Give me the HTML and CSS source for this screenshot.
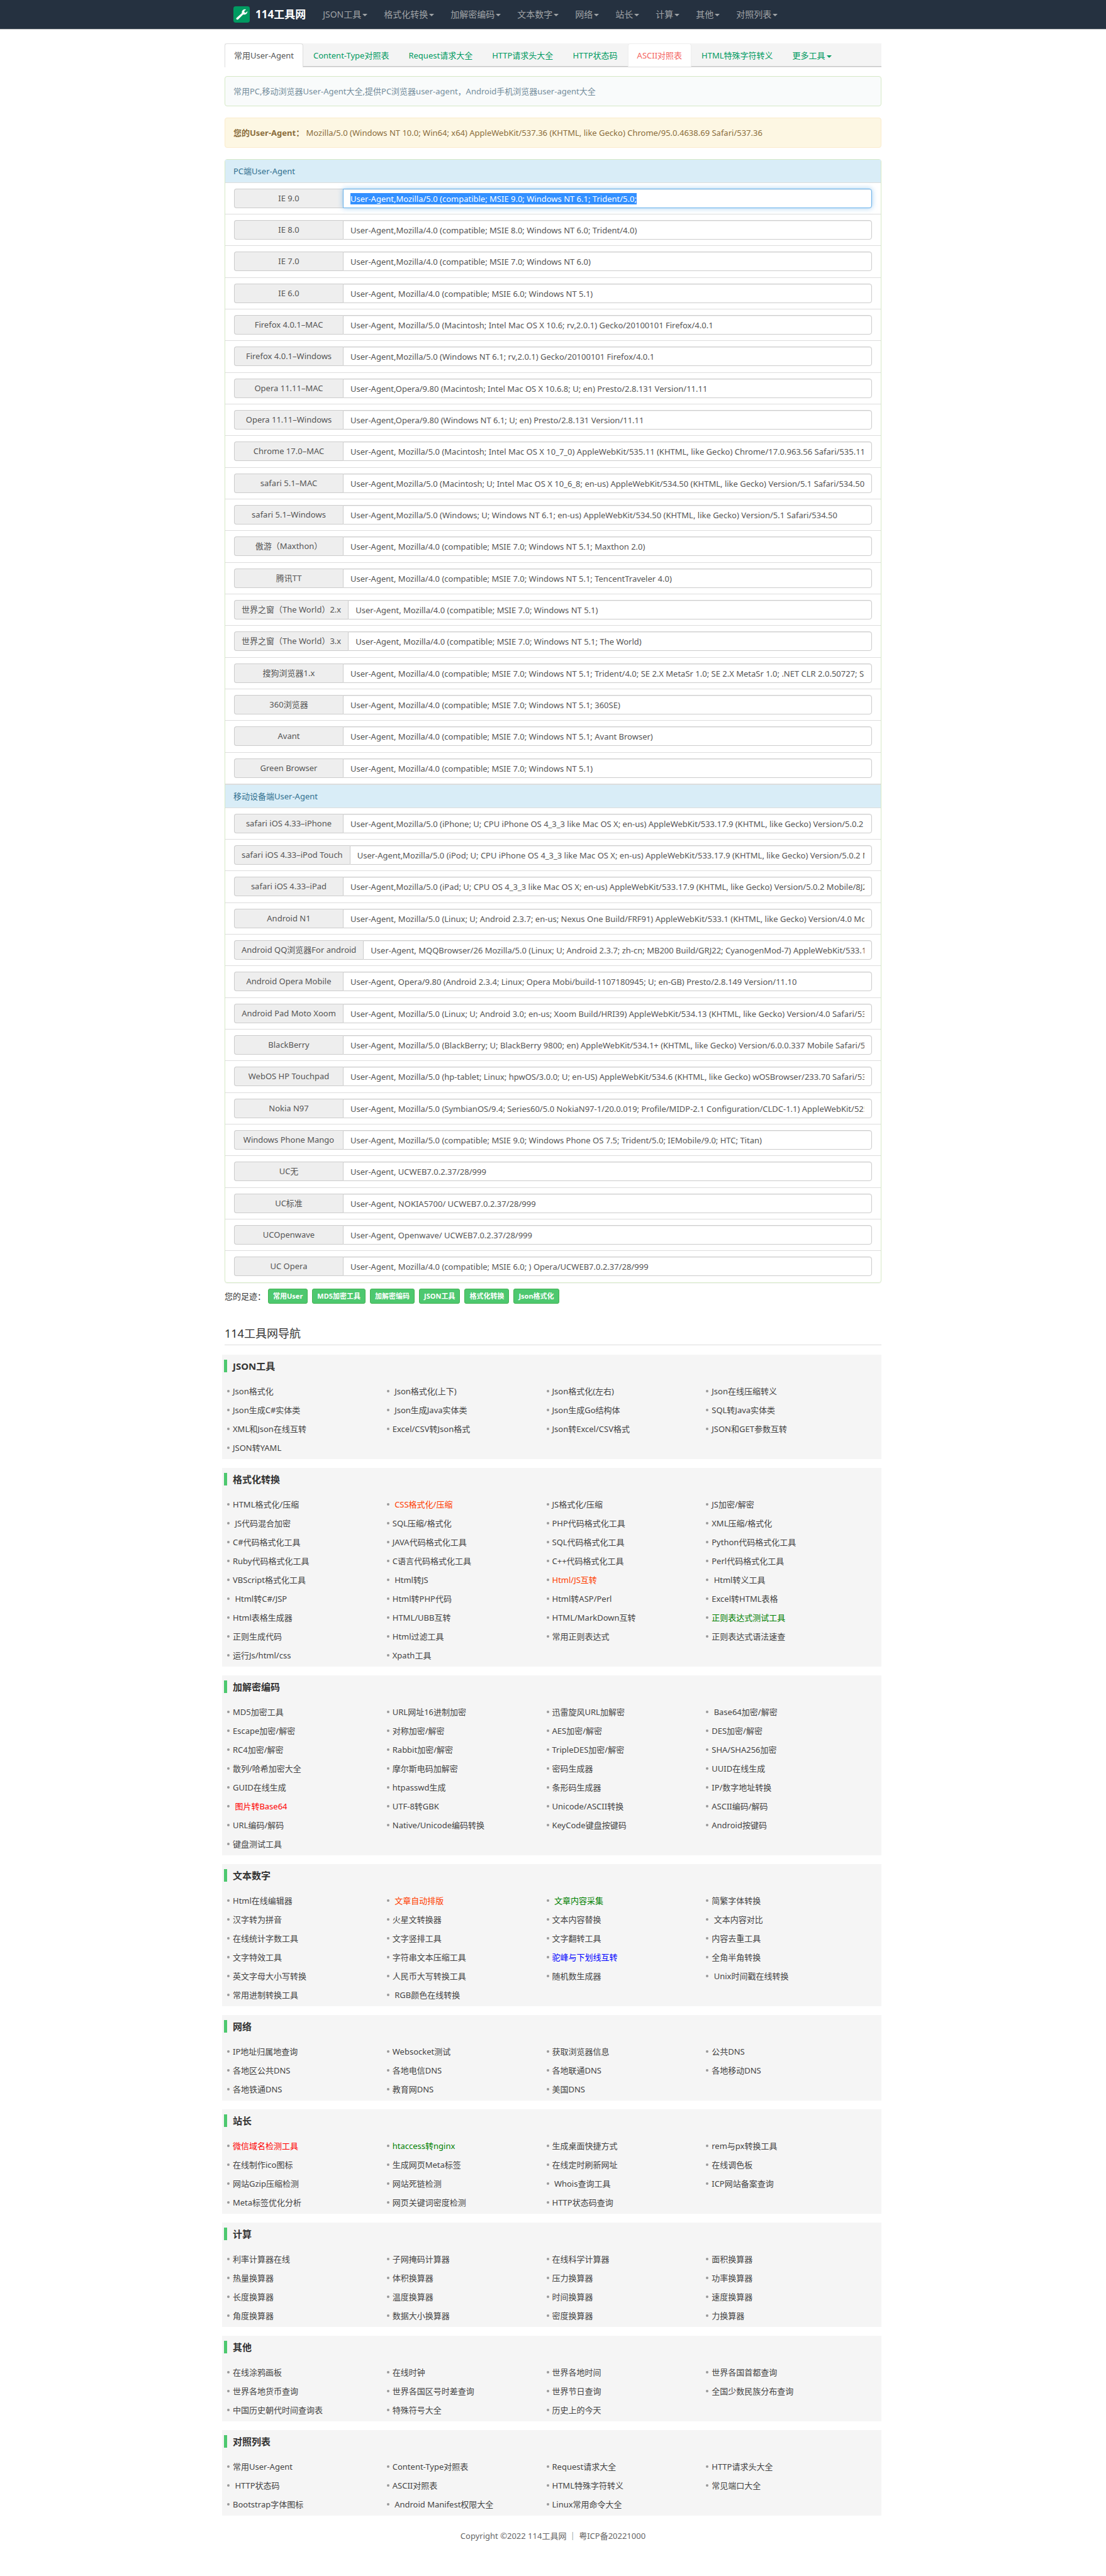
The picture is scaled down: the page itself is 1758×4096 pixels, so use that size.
FILE: index.html
```html
<!DOCTYPE html>
<html lang="zh-CN">
<head>
<meta charset="utf-8">
<meta name="viewport" content="width=device-width, initial-scale=1">
<title>常用User-Agent - 114工具网</title>
<link rel="stylesheet" href="styles.css">
</head>
<body>
<header class="navbar">
  <div class="container navbar-inner">
    <a class="brand" href="#">
      <svg class="brand-icon" viewBox="0 0 28 28" aria-hidden="true"><rect width="28" height="28" rx="4" fill="#009a61"/><path fill="#fff" d="M5 20.3 14.6 11.6C13.8 8 16 5.2 19.6 5l2.2.3-3.2 2.9.4 2.3 2.2.5 2.8-2.6c.3 3.6-2.4 6.4-6.2 5.8l-1-.2L8 22.6C6.200 23.700 3.900 21.900 5 20.300Z"/></svg>
      <span>114工具网</span>
    </a>
    <nav class="main-nav">
      <a href="#">JSON工具<i class="caret"></i></a>
      <a href="#">格式化转换<i class="caret"></i></a>
      <a href="#">加解密编码<i class="caret"></i></a>
      <a href="#">文本数字<i class="caret"></i></a>
      <a href="#">网络<i class="caret"></i></a>
      <a href="#">站长<i class="caret"></i></a>
      <a href="#">计算<i class="caret"></i></a>
      <a href="#">其他<i class="caret"></i></a>
      <a href="#">对照列表<i class="caret"></i></a>
    </nav>
  </div>
</header>

<main class="container">
  <nav class="tabs">
    <a class="tab tab-active" href="#">常用User-Agent</a>
    <a class="tab" href="#">Content-Type对照表</a>
    <a class="tab" href="#">Request请求大全</a>
    <a class="tab" href="#">HTTP请求头大全</a>
    <a class="tab" href="#">HTTP状态码</a>
    <a class="tab tab-hot" href="#">ASCII对照表</a>
    <a class="tab" href="#">HTML特殊字符转义</a>
    <a class="tab" href="#">更多工具<i class="caret"></i></a>
  </nav>

  <p class="notice notice-intro">常用PC,移动浏览器User-Agent大全,提供PC浏览器user-agent，Android手机浏览器user-agent大全</p>
  <p class="notice notice-agent"><strong>您的User-Agent：</strong> Mozilla/5.0 (Windows NT 10.0; Win64; x64) AppleWebKit/537.36 (KHTML, like Gecko) Chrome/95.0.4638.69 Safari/537.36</p>

  <section class="panel">
    <h2 class="panel-heading">PC端User-Agent</h2>
    <ul class="agents">
      <li><label for="pc1">IE 9.0</label><input id="pc1" type="text" autofocus value="User-Agent,Mozilla/5.0 (compatible; MSIE 9.0; Windows NT 6.1; Trident/5.0;"></li>
      <li><label for="pc2">IE 8.0</label><input id="pc2" type="text" value="User-Agent,Mozilla/4.0 (compatible; MSIE 8.0; Windows NT 6.0; Trident/4.0)"></li>
      <li><label for="pc3">IE 7.0</label><input id="pc3" type="text" value="User-Agent,Mozilla/4.0 (compatible; MSIE 7.0; Windows NT 6.0)"></li>
      <li><label for="pc4">IE 6.0</label><input id="pc4" type="text" value="User-Agent, Mozilla/4.0 (compatible; MSIE 6.0; Windows NT 5.1)"></li>
      <li><label for="pc5">Firefox 4.0.1–MAC</label><input id="pc5" type="text" value="User-Agent, Mozilla/5.0 (Macintosh; Intel Mac OS X 10.6; rv,2.0.1) Gecko/20100101 Firefox/4.0.1"></li>
      <li><label for="pc6">Firefox 4.0.1–Windows</label><input id="pc6" type="text" value="User-Agent,Mozilla/5.0 (Windows NT 6.1; rv,2.0.1) Gecko/20100101 Firefox/4.0.1"></li>
      <li><label for="pc7">Opera 11.11–MAC</label><input id="pc7" type="text" value="User-Agent,Opera/9.80 (Macintosh; Intel Mac OS X 10.6.8; U; en) Presto/2.8.131 Version/11.11"></li>
      <li><label for="pc8">Opera 11.11–Windows</label><input id="pc8" type="text" value="User-Agent,Opera/9.80 (Windows NT 6.1; U; en) Presto/2.8.131 Version/11.11"></li>
      <li><label for="pc9">Chrome 17.0–MAC</label><input id="pc9" type="text" value="User-Agent, Mozilla/5.0 (Macintosh; Intel Mac OS X 10_7_0) AppleWebKit/535.11 (KHTML, like Gecko) Chrome/17.0.963.56 Safari/535.11"></li>
      <li><label for="pc10">safari 5.1–MAC</label><input id="pc10" type="text" value="User-Agent,Mozilla/5.0 (Macintosh; U; Intel Mac OS X 10_6_8; en-us) AppleWebKit/534.50 (KHTML, like Gecko) Version/5.1 Safari/534.50"></li>
      <li><label for="pc11">safari 5.1–Windows</label><input id="pc11" type="text" value="User-Agent,Mozilla/5.0 (Windows; U; Windows NT 6.1; en-us) AppleWebKit/534.50 (KHTML, like Gecko) Version/5.1 Safari/534.50"></li>
      <li><label for="pc12">傲游（Maxthon）</label><input id="pc12" type="text" value="User-Agent, Mozilla/4.0 (compatible; MSIE 7.0; Windows NT 5.1; Maxthon 2.0)"></li>
      <li><label for="pc13">腾讯TT</label><input id="pc13" type="text" value="User-Agent, Mozilla/4.0 (compatible; MSIE 7.0; Windows NT 5.1; TencentTraveler 4.0)"></li>
      <li><label for="pc14">世界之窗（The World）2.x</label><input id="pc14" type="text" value="User-Agent, Mozilla/4.0 (compatible; MSIE 7.0; Windows NT 5.1)"></li>
      <li><label for="pc15">世界之窗（The World）3.x</label><input id="pc15" type="text" value="User-Agent, Mozilla/4.0 (compatible; MSIE 7.0; Windows NT 5.1; The World)"></li>
      <li><label for="pc16">搜狗浏览器1.x</label><input id="pc16" type="text" value="User-Agent, Mozilla/4.0 (compatible; MSIE 7.0; Windows NT 5.1; Trident/4.0; SE 2.X MetaSr 1.0; SE 2.X MetaSr 1.0; .NET CLR 2.0.50727; SE 2.X MetaSr 1.0)"></li>
      <li><label for="pc17">360浏览器</label><input id="pc17" type="text" value="User-Agent, Mozilla/4.0 (compatible; MSIE 7.0; Windows NT 5.1; 360SE)"></li>
      <li><label for="pc18">Avant</label><input id="pc18" type="text" value="User-Agent, Mozilla/4.0 (compatible; MSIE 7.0; Windows NT 5.1; Avant Browser)"></li>
      <li><label for="pc19">Green Browser</label><input id="pc19" type="text" value="User-Agent, Mozilla/4.0 (compatible; MSIE 7.0; Windows NT 5.1)"></li>
    </ul>
    <h2 class="panel-heading">移动设备端User-Agent</h2>
    <ul class="agents">
      <li><label for="m1">safari iOS 4.33–iPhone</label><input id="m1" type="text" value="User-Agent,Mozilla/5.0 (iPhone; U; CPU iPhone OS 4_3_3 like Mac OS X; en-us) AppleWebKit/533.17.9 (KHTML, like Gecko) Version/5.0.2 Mobile/8J2 Safari/6533.18.5"></li>
      <li><label for="m2">safari iOS 4.33–iPod Touch</label><input id="m2" type="text" value="User-Agent,Mozilla/5.0 (iPod; U; CPU iPhone OS 4_3_3 like Mac OS X; en-us) AppleWebKit/533.17.9 (KHTML, like Gecko) Version/5.0.2 Mobile/8J2 Safari/6533.18.5"></li>
      <li><label for="m3">safari iOS 4.33–iPad</label><input id="m3" type="text" value="User-Agent,Mozilla/5.0 (iPad; U; CPU OS 4_3_3 like Mac OS X; en-us) AppleWebKit/533.17.9 (KHTML, like Gecko) Version/5.0.2 Mobile/8J2 Safari/6533.18.5"></li>
      <li><label for="m4">Android N1</label><input id="m4" type="text" value="User-Agent, Mozilla/5.0 (Linux; U; Android 2.3.7; en-us; Nexus One Build/FRF91) AppleWebKit/533.1 (KHTML, like Gecko) Version/4.0 Mobile Safari/533.1"></li>
      <li><label for="m5">Android QQ浏览器For android</label><input id="m5" type="text" value="User-Agent, MQQBrowser/26 Mozilla/5.0 (Linux; U; Android 2.3.7; zh-cn; MB200 Build/GRJ22; CyanogenMod-7) AppleWebKit/533.1 (KHTML, like Gecko) Version/4.0 Mobile Safari/533.1"></li>
      <li><label for="m6">Android Opera Mobile</label><input id="m6" type="text" value="User-Agent, Opera/9.80 (Android 2.3.4; Linux; Opera Mobi/build-1107180945; U; en-GB) Presto/2.8.149 Version/11.10"></li>
      <li><label for="m7">Android Pad Moto Xoom</label><input id="m7" type="text" value="User-Agent, Mozilla/5.0 (Linux; U; Android 3.0; en-us; Xoom Build/HRI39) AppleWebKit/534.13 (KHTML, like Gecko) Version/4.0 Safari/534.13"></li>
      <li><label for="m8">BlackBerry</label><input id="m8" type="text" value="User-Agent, Mozilla/5.0 (BlackBerry; U; BlackBerry 9800; en) AppleWebKit/534.1+ (KHTML, like Gecko) Version/6.0.0.337 Mobile Safari/534.1+"></li>
      <li><label for="m9">WebOS HP Touchpad</label><input id="m9" type="text" value="User-Agent, Mozilla/5.0 (hp-tablet; Linux; hpwOS/3.0.0; U; en-US) AppleWebKit/534.6 (KHTML, like Gecko) wOSBrowser/233.70 Safari/534.6 TouchPad/1.0"></li>
      <li><label for="m10">Nokia N97</label><input id="m10" type="text" value="User-Agent, Mozilla/5.0 (SymbianOS/9.4; Series60/5.0 NokiaN97-1/20.0.019; Profile/MIDP-2.1 Configuration/CLDC-1.1) AppleWebKit/525 (KHTML, like Gecko) BrowserNG/7.1.18124"></li>
      <li><label for="m11">Windows Phone Mango</label><input id="m11" type="text" value="User-Agent, Mozilla/5.0 (compatible; MSIE 9.0; Windows Phone OS 7.5; Trident/5.0; IEMobile/9.0; HTC; Titan)"></li>
      <li><label for="m12">UC无</label><input id="m12" type="text" value="User-Agent, UCWEB7.0.2.37/28/999"></li>
      <li><label for="m13">UC标准</label><input id="m13" type="text" value="User-Agent, NOKIA5700/ UCWEB7.0.2.37/28/999"></li>
      <li><label for="m14">UCOpenwave</label><input id="m14" type="text" value="User-Agent, Openwave/ UCWEB7.0.2.37/28/999"></li>
      <li><label for="m15">UC Opera</label><input id="m15" type="text" value="User-Agent, Mozilla/4.0 (compatible; MSIE 6.0; ) Opera/UCWEB7.0.2.37/28/999"></li>
    </ul>
  </section>

  <div class="history">
    <span class="history-label">您的足迹：</span>
    <a href="#">常用User</a>
    <a href="#">MD5加密工具</a>
    <a href="#">加解密编码</a>
    <a href="#">JSON工具</a>
    <a href="#">格式化转换</a>
    <a href="#">Json格式化</a>
  </div>

  <h1 class="page-title">114工具网导航</h1>

  <section class="group">
    <h3>JSON工具</h3>
    <ul>
      <li><a href="#">Json格式化</a></li>
      <li><a href="#">&nbsp;Json格式化(上下)</a></li>
      <li><a href="#">Json格式化(左右)</a></li>
      <li><a href="#">Json在线压缩转义</a></li>
      <li><a href="#">Json生成C#实体类</a></li>
      <li><a href="#">&nbsp;Json生成Java实体类</a></li>
      <li><a href="#">Json生成Go结构体</a></li>
      <li><a href="#">SQL转Java实体类</a></li>
      <li><a href="#">XML和Json在线互转</a></li>
      <li><a href="#">Excel/CSV转Json格式</a></li>
      <li><a href="#">Json转Excel/CSV格式</a></li>
      <li><a href="#">JSON和GET参数互转</a></li>
      <li><a href="#">JSON转YAML</a></li>
    </ul>
  </section>

  <section class="group">
    <h3>格式化转换</h3>
    <ul>
      <li><a href="#">HTML格式化/压缩</a></li>
      <li><a class="orange" href="#">&nbsp;CSS格式化/压缩</a></li>
      <li><a href="#">JS格式化/压缩</a></li>
      <li><a href="#">JS加密/解密</a></li>
      <li><a href="#">&nbsp;JS代码混合加密</a></li>
      <li><a href="#">SQL压缩/格式化</a></li>
      <li><a href="#">PHP代码格式化工具</a></li>
      <li><a href="#">XML压缩/格式化</a></li>
      <li><a href="#">C#代码格式化工具</a></li>
      <li><a href="#">JAVA代码格式化工具</a></li>
      <li><a href="#">SQL代码格式化工具</a></li>
      <li><a href="#">Python代码格式化工具</a></li>
      <li><a href="#">Ruby代码格式化工具</a></li>
      <li><a href="#">C语言代码格式化工具</a></li>
      <li><a href="#">C++代码格式化工具</a></li>
      <li><a href="#">Perl代码格式化工具</a></li>
      <li><a href="#">VBScript格式化工具</a></li>
      <li><a href="#">&nbsp;Html转JS</a></li>
      <li><a class="orange" href="#">Html/JS互转</a></li>
      <li><a href="#">&nbsp;Html转义工具</a></li>
      <li><a href="#">&nbsp;Html转C#/JSP</a></li>
      <li><a href="#">Html转PHP代码</a></li>
      <li><a href="#">Html转ASP/Perl</a></li>
      <li><a href="#">Excel转HTML表格</a></li>
      <li><a href="#">Html表格生成器</a></li>
      <li><a href="#">HTML/UBB互转</a></li>
      <li><a href="#">HTML/MarkDown互转</a></li>
      <li><a class="green" href="#">正则表达式测试工具</a></li>
      <li><a href="#">正则生成代码</a></li>
      <li><a href="#">Html过滤工具</a></li>
      <li><a href="#">常用正则表达式</a></li>
      <li><a href="#">正则表达式语法速查</a></li>
      <li><a href="#">运行Js/html/css</a></li>
      <li><a href="#">Xpath工具</a></li>
    </ul>
  </section>

  <section class="group">
    <h3>加解密编码</h3>
    <ul>
      <li><a href="#">MD5加密工具</a></li>
      <li><a href="#">URL网址16进制加密</a></li>
      <li><a href="#">迅雷旋风URL加解密</a></li>
      <li><a href="#">&nbsp;Base64加密/解密</a></li>
      <li><a href="#">Escape加密/解密</a></li>
      <li><a href="#">对称加密/解密</a></li>
      <li><a href="#">AES加密/解密</a></li>
      <li><a href="#">DES加密/解密</a></li>
      <li><a href="#">RC4加密/解密</a></li>
      <li><a href="#">Rabbit加密/解密</a></li>
      <li><a href="#">TripleDES加密/解密</a></li>
      <li><a href="#">SHA/SHA256加密</a></li>
      <li><a href="#">散列/哈希加密大全</a></li>
      <li><a href="#">摩尔斯电码加解密</a></li>
      <li><a href="#">密码生成器</a></li>
      <li><a href="#">UUID在线生成</a></li>
      <li><a href="#">GUID在线生成</a></li>
      <li><a href="#">htpasswd生成</a></li>
      <li><a href="#">条形码生成器</a></li>
      <li><a href="#">IP/数字地址转换</a></li>
      <li><a class="red" href="#">&nbsp;图片转Base64</a></li>
      <li><a href="#">UTF-8转GBK</a></li>
      <li><a href="#">Unicode/ASCII转换</a></li>
      <li><a href="#">ASCII编码/解码</a></li>
      <li><a href="#">URL编码/解码</a></li>
      <li><a href="#">Native/Unicode编码转换</a></li>
      <li><a href="#">KeyCode键盘按键码</a></li>
      <li><a href="#">Android按键码</a></li>
      <li><a href="#">键盘测试工具</a></li>
    </ul>
  </section>

  <section class="group">
    <h3>文本数字</h3>
    <ul>
      <li><a href="#">Html在线编辑器</a></li>
      <li><a class="orange" href="#">&nbsp;文章自动排版</a></li>
      <li><a class="green" href="#">&nbsp;文章内容采集</a></li>
      <li><a href="#">简繁字体转换</a></li>
      <li><a href="#">汉字转为拼音</a></li>
      <li><a href="#">火星文转换器</a></li>
      <li><a href="#">文本内容替换</a></li>
      <li><a href="#">&nbsp;文本内容对比</a></li>
      <li><a href="#">在线统计字数工具</a></li>
      <li><a href="#">文字竖排工具</a></li>
      <li><a href="#">文字翻转工具</a></li>
      <li><a href="#">内容去重工具</a></li>
      <li><a href="#">文字特效工具</a></li>
      <li><a href="#">字符串文本压缩工具</a></li>
      <li><a class="blue" href="#">驼峰与下划线互转</a></li>
      <li><a href="#">全角半角转换</a></li>
      <li><a href="#">英文字母大小写转换</a></li>
      <li><a href="#">人民币大写转换工具</a></li>
      <li><a href="#">随机数生成器</a></li>
      <li><a href="#">&nbsp;Unix时间戳在线转换</a></li>
      <li><a href="#">常用进制转换工具</a></li>
      <li><a href="#">&nbsp;RGB颜色在线转换</a></li>
    </ul>
  </section>

  <section class="group">
    <h3>网络</h3>
    <ul>
      <li><a href="#">IP地址归属地查询</a></li>
      <li><a href="#">Websocket测试</a></li>
      <li><a href="#">获取浏览器信息</a></li>
      <li><a href="#">公共DNS</a></li>
      <li><a href="#">各地区公共DNS</a></li>
      <li><a href="#">各地电信DNS</a></li>
      <li><a href="#">各地联通DNS</a></li>
      <li><a href="#">各地移动DNS</a></li>
      <li><a href="#">各地铁通DNS</a></li>
      <li><a href="#">教育网DNS</a></li>
      <li><a href="#">美国DNS</a></li>
    </ul>
  </section>

  <section class="group">
    <h3>站长</h3>
    <ul>
      <li><a class="red" href="#">微信域名检测工具</a></li>
      <li><a class="green" href="#">htaccess转nginx</a></li>
      <li><a href="#">生成桌面快捷方式</a></li>
      <li><a href="#">rem与px转换工具</a></li>
      <li><a href="#">在线制作ico图标</a></li>
      <li><a href="#">生成网页Meta标签</a></li>
      <li><a href="#">在线定时刷新网址</a></li>
      <li><a href="#">在线调色板</a></li>
      <li><a href="#">网站Gzip压缩检测</a></li>
      <li><a href="#">网站死链检测</a></li>
      <li><a href="#">&nbsp;Whois查询工具</a></li>
      <li><a href="#">ICP网站备案查询</a></li>
      <li><a href="#">Meta标签优化分析</a></li>
      <li><a href="#">网页关键词密度检测</a></li>
      <li><a href="#">HTTP状态码查询</a></li>
    </ul>
  </section>

  <section class="group">
    <h3>计算</h3>
    <ul>
      <li><a href="#">利率计算器在线</a></li>
      <li><a href="#">子网掩码计算器</a></li>
      <li><a href="#">在线科学计算器</a></li>
      <li><a href="#">面积换算器</a></li>
      <li><a href="#">热量换算器</a></li>
      <li><a href="#">体积换算器</a></li>
      <li><a href="#">压力换算器</a></li>
      <li><a href="#">功率换算器</a></li>
      <li><a href="#">长度换算器</a></li>
      <li><a href="#">温度换算器</a></li>
      <li><a href="#">时间换算器</a></li>
      <li><a href="#">速度换算器</a></li>
      <li><a href="#">角度换算器</a></li>
      <li><a href="#">数据大小换算器</a></li>
      <li><a href="#">密度换算器</a></li>
      <li><a href="#">力换算器</a></li>
    </ul>
  </section>

  <section class="group">
    <h3>其他</h3>
    <ul>
      <li><a href="#">在线涂鸦画板</a></li>
      <li><a href="#">在线时钟</a></li>
      <li><a href="#">世界各地时间</a></li>
      <li><a href="#">世界各国首都查询</a></li>
      <li><a href="#">世界各地货币查询</a></li>
      <li><a href="#">世界各国区号时差查询</a></li>
      <li><a href="#">世界节日查询</a></li>
      <li><a href="#">全国少数民族分布查询</a></li>
      <li><a href="#">中国历史朝代时间查询表</a></li>
      <li><a href="#">特殊符号大全</a></li>
      <li><a href="#">历史上的今天</a></li>
    </ul>
  </section>

  <section class="group">
    <h3>对照列表</h3>
    <ul>
      <li><a href="#">常用User-Agent</a></li>
      <li><a href="#">Content-Type对照表</a></li>
      <li><a href="#">Request请求大全</a></li>
      <li><a href="#">HTTP请求头大全</a></li>
      <li><a href="#">&nbsp;HTTP状态码</a></li>
      <li><a href="#">ASCII对照表</a></li>
      <li><a href="#">HTML特殊字符转义</a></li>
      <li><a href="#">常见端口大全</a></li>
      <li><a href="#">Bootstrap字体图标</a></li>
      <li><a href="#">&nbsp;Android Manifest权限大全</a></li>
      <li><a href="#">Linux常用命令大全</a></li>
    </ul>
  </section>
</main>

<footer class="footer">Copyright ©2022 114工具网 ｜ 粤ICP备20221000</footer>
<script src="script.js"></script>
</body>
</html>
```

FILE: script.js
```js
// Focusing a field selects its whole value, ready to copy.
document.querySelectorAll('.agents input').forEach(function (input) {
  input.addEventListener('focus', function () { input.select(); });
});
var first = document.getElementById('pc1');
first.focus({ preventScroll: true });
first.select();
```

FILE: styles.css
```css
*,
*::before {
  box-sizing: border-box;
}

body {
  margin: 0;
  background: #fff;
  color: #333;
  font-family: "Noto Sans", "Noto Sans CJK SC", sans-serif;
  font-size: 13px;
  line-height: 20px;
}

a {
  color: inherit;
  text-decoration: none;
}

ul {
  margin: 0;
  padding: 0;
  list-style: none;
}

::selection {
  background: #3390ff;
  color: #fff;
}

.container {
  max-width: 1044px;
  margin: 0 auto;
}

.caret {
  display: inline-block;
  margin-left: 2px;
  vertical-align: middle;
  border-top: 4px solid;
  border-right: 4px solid transparent;
  border-left: 4px solid transparent;
}

/* Top bar */
.navbar {
  background: #253140;
  box-shadow: 0 1px 1px rgba(0, 0, 0, .2);
}

.navbar-inner {
  display: flex;
  align-items: center;
  min-height: 46px;
  padding-left: 14px;
}

.brand {
  display: flex;
  align-items: center;
  gap: 9px;
  margin-right: 14px;
  color: #fff;
  font-size: 17px;
  font-weight: 700;
}

.brand-icon {
  width: 26px;
  height: 26px;
}

.main-nav {
  display: flex;
}

.main-nav a {
  padding: 0 13px;
  color: #a0a3a6;
  font-size: 14px;
  line-height: 46px;
}

/* Tabs */
.tabs {
  display: flex;
  gap: 1px;
  margin-top: 23px;
  background: #f4f4f4;
  border-bottom: 1px solid #ddd;
  box-shadow: inset 0 -1px #c8c8c8;
}

.tab {
  padding: 1px 14px 0;
  border: 1px solid transparent;
  border-bottom: 0;
  border-radius: 4px 4px 0 0;
  color: #009a61;
  line-height: 35px;
}

.tab-active {
  margin-bottom: -1px;
  background: #fff;
  border-color: #ddd;
  color: #555;
}

.tab-hot {
  background: #fff;
  border-color: #eee;
  color: #f4645f;
}

/* Notices */
.notice {
  margin: 14px 0 18px;
  padding: 13px;
  border: 1px solid;
  border-radius: 4px;
}

.notice-intro {
  background: #f9fbfb;
  border-color: #d6e9c6;
  color: #748d9b;
}

.notice-agent {
  background: #fdf7e3;
  border-color: #faebcc;
  color: #8a6d3b;
}

/* Agent list */
.panel {
  border: 1px solid #d6e9c6;
  border-radius: 4px;
  box-shadow: 0 1px 1px rgba(0, 0, 0, .05);
}

.panel-heading {
  margin: 0;
  padding: 8px 13px;
  background: #d9edf7;
  border-bottom: 1px solid #ddd;
  color: #31708f;
  font-size: 13px;
  font-weight: 400;
}

.agents + .panel-heading {
  border-top: 1px solid #ddd;
}

.agents li {
  display: flex;
  padding: 9px 14px;
  border-bottom: 1px solid #ddd;
}

.agents li:nth-child(3n) {
  padding-bottom: 10px;
}

.agents:last-child li:last-child {
  border-bottom: 0;
}

.agents label {
  min-width: 173px;
  padding: 0 11px;
  background: #eee;
  border: 1px solid #ccc;
  border-right: 0;
  border-radius: 4px 0 0 4px;
  color: #555;
  line-height: 29px;
  text-align: center;
  white-space: nowrap;
}

.agents input {
  flex: 1;
  min-width: 0;
  height: 31px;
  padding: 0 11px;
  background: #fff;
  border: 1px solid #ccc;
  border-radius: 0 4px 4px 0;
  box-shadow: inset 0 1px 1px rgba(0, 0, 0, .075);
  color: #555;
  font: inherit;
}

.agents input:focus {
  border-color: #66afe9;
  outline: 0;
  box-shadow: inset 0 1px 1px rgba(0, 0, 0, .075), 0 0 8px rgba(102, 175, 233, .6);
}

/* Recently visited */
.history {
  display: flex;
  align-items: center;
  gap: 7px;
  margin-top: 9px;
}

.history-label {
  width: 62px;
  white-space: nowrap;
}

.history a {
  padding: 0 7px;
  background: #4dc86f;
  border: 1px solid #45b352;
  border-radius: 3px;
  color: #fff;
  font-size: 11px;
  font-weight: 700;
  line-height: 22px;
}

.page-title {
  margin: 35px 0 15px;
  padding-bottom: 6px;
  border-bottom: 1px solid #ddd;
  font-size: 18px;
  font-weight: 400;
  line-height: 24px;
}

/* Tool groups */
.group {
  margin: 0 0 14px -4px;
  padding: 8px 25px 3px 8px;
  background: #f5f5f5;
}

.group h3 {
  margin: 0 0 15px -5px;
  padding-left: 9px;
  border-left: 5px solid #4dc86f;
  font-size: 15px;
  font-weight: 700;
}

.group ul {
  display: grid;
  grid-template-columns: repeat(4, 1fr);
}

.group li {
  display: flex;
  align-items: center;
  gap: 5px;
  min-height: 30px;
  color: #444;
}

.group li::before {
  content: "";
  width: 4px;
  height: 4px;
  border-radius: 50%;
  background: #999;
}

.group .orange {
  color: #ff3c00;
}

.group .red {
  color: #f00;
}

.group .green {
  color: #008000;
}

.group .blue {
  color: #00f;
}

.footer {
  padding: 8px 0 53px;
  color: #666;
  text-align: center;
}
```
